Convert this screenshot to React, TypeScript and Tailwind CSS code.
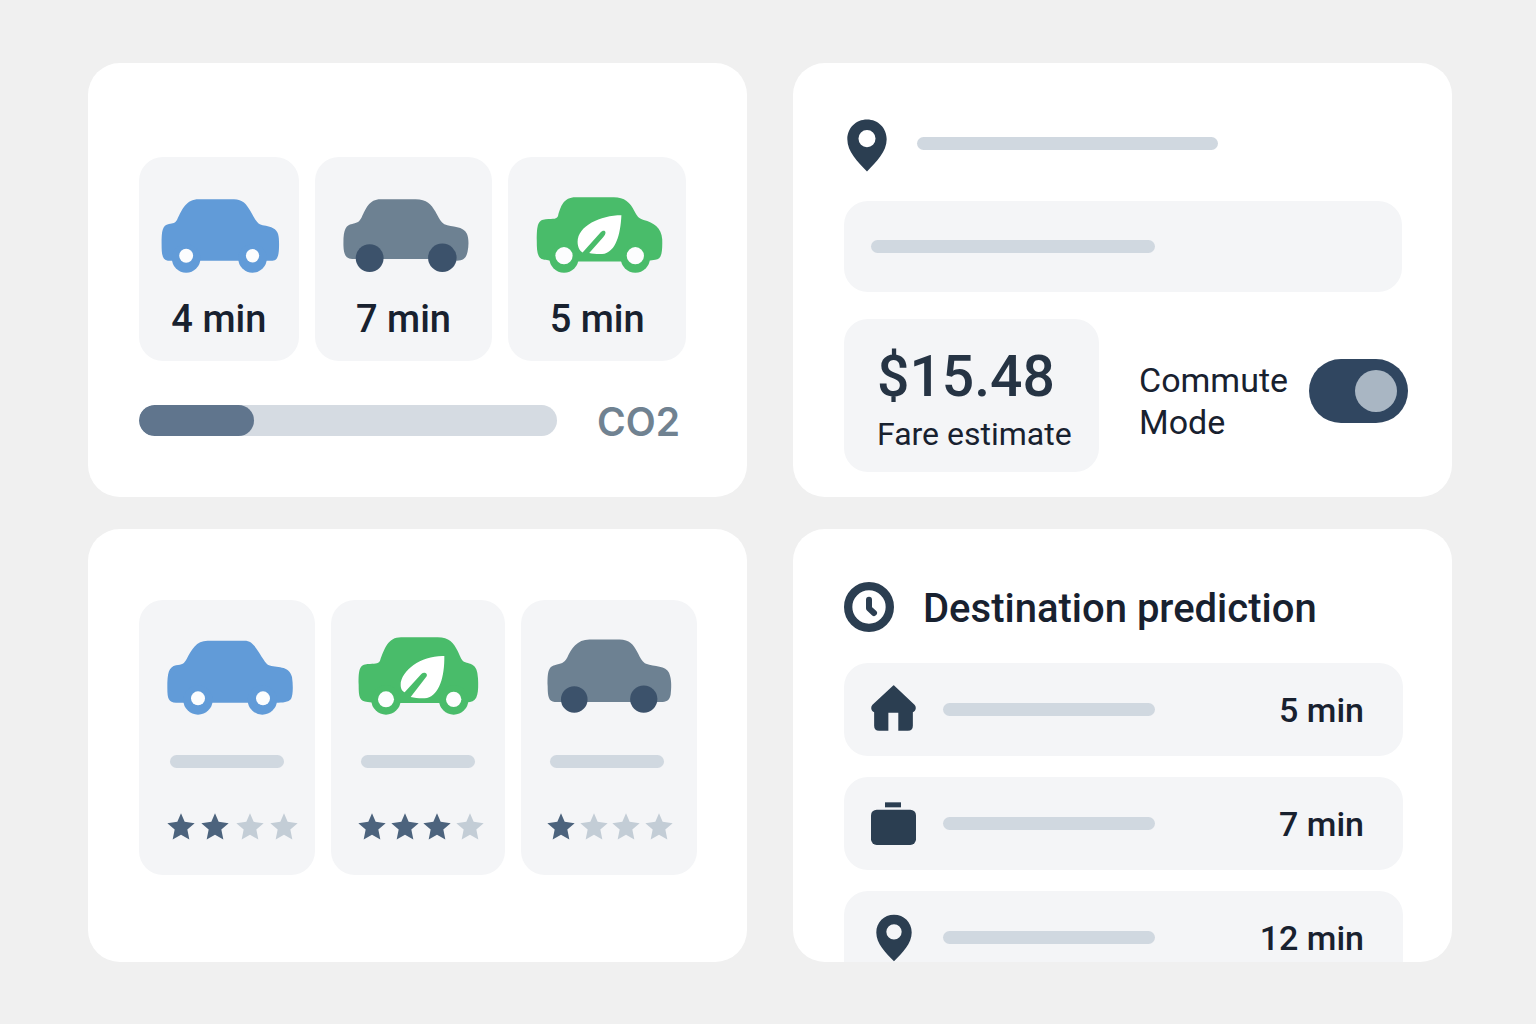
import { useState } from "react";

type CarArt = {
  box: string;
  width: number;
  height: number;
  color: string;
  body: string;
  wheels: number[][];
  hubs?: number[][];
  wheelColor?: string;
  leaf?: string;
};

const BLUE = "#619bd8";
const SLATE = "#6d8192";
const GREEN = "#49bc6a";
const TIRE = "#3c526b";

const sedan: CarArt = {
  box: "95 149 357 223",
  width: 119,
  height: 74,
  color: BLUE,
  body: "M208 150H314C340 150 352 165 364 186C374 204 382 219 392 225C402 230 418 229 432 237C448 245 450 260 450 285C450 315 447 335 430 335H115C98 333 96 315 96 285C96 245 98 228 118 224C130 223 137 222 143 211C158 180 170 150 208 150Z",
  wheels: [[170, 328, 43], [370, 328, 43]],
  hubs: [[170, 320, 21], [370, 320, 20]],
};

const coupe: CarArt = {
  box: "637 149 379 223",
  width: 126,
  height: 74,
  color: SLATE,
  body: "M750 150H855C890 150 902 165 915 187C925 205 932 220 942 225C965 234 1000 230 1010 254C1016 268 1016 290 1012 308C1008 327 1000 334 980 335L960 330H670C645 330 639 318 638 290C637 240 645 228 664 224C680 221 686 218 693 204C706 178 715 150 750 150Z",
  wheels: [[717, 327, 42], [936, 326, 43]],
  wheelColor: TIRE,
};

const eco: CarArt = {
  box: "107 143 380 229",
  width: 127,
  height: 76,
  color: GREEN,
  body: "M225 144H340C372 144 390 160 402 185C410 200 414 207 430 212C460 220 484 235 486 270C487 310 484 332 465 332L430 337H160L135 332C110 332 108 310 108 275C108 225 112 212 135 210C160 208 168 210 172 200C180 172 188 144 225 144Z",
  wheels: [[190, 327, 44], [405, 327, 44]],
  hubs: [[190, 320, 26], [405, 320, 26]],
  leaf: "M363 198C300 198 231 230 231 278C231 295 238 306 246 310L300 250C306 242 315 243 315 250C315 255 312 260 308 264L266 312C280 315 300 316 312 314C345 305 360 260 363 198Z",
};

const sedanWide: CarArt = {
  box: "113 151 378 225",
  width: 126,
  height: 75,
  color: BLUE,
  body: "M235 153H345C365 153 374 165 388 187C400 206 408 220 417 226C440 235 480 226 488 262C492 290 491 318 485 328C478 338 460 339 440 339H140C118 338 114 328 114 295C114 250 118 232 140 227C158 225 165 222 172 208C187 180 200 153 235 153Z",
  wheels: [[206, 331, 44], [399, 331, 44]],
  hubs: [[206, 326, 21], [401, 326, 21]],
};

const ecoWide: CarArt = {
  box: "686 141 363 234",
  width: 121,
  height: 78,
  color: GREEN,
  body: "M815 142H925C960 142 972 158 985 183C993 200 997 214 1008 217C1030 224 1044 225 1046 265C1048 305 1046 334 1022 336L1000 339H740L715 336C690 334 688 322 688 285C687 235 692 224 715 222C735 220 746 223 752 212C766 175 776 142 815 142Z",
  wheels: [[770, 330, 44], [973, 330, 44]],
  hubs: [[770, 328, 24], [973, 328, 23]],
  leaf: "M945 198C880 195 814 240 814 285C814 298 820 304 826 307L876 252C884 244 896 250 892 259L844 321C860 325 880 326 893 324C930 315 946 260 945 198Z",
};

const coupeWide: CarArt = {
  box: "142 149 376 227",
  width: 125,
  height: 76,
  color: SLATE,
  body: "M270 150H360C390 150 402 165 414 188C424 208 430 218 440 223C465 233 500 228 509 250C518 270 516 300 514 315C511 330 505 336 490 338H165C148 334 144 325 144 290C143 245 147 232 165 227C185 222 193 222 203 204C215 178 232 150 270 150Z",
  wheels: [[224, 330, 40], [433, 329, 41]],
  wheelColor: TIRE,
};

function Car({ art }: { art: CarArt }) {
  return (
    <svg viewBox={art.box} width={art.width} height={art.height} className="shrink-0" aria-hidden="true">
      <path d={art.body} fill={art.color} />
      {art.wheels.map(([cx, cy, r]) => (
        <circle key={cx} cx={cx} cy={cy} r={r} fill={art.wheelColor ?? art.color} />
      ))}
      {art.hubs?.map(([cx, cy, r]) => (
        <circle key={cx} cx={cx} cy={cy} r={r} fill="#fcfdfe" />
      ))}
      {art.leaf && <path d={art.leaf} fill="#ffffff" />}
    </svg>
  );
}

function Pin({ className }: { className: string }) {
  return (
    <svg viewBox="50 56 122 160" className={className} fill="#2b3e51" aria-hidden="true">
      <path
        fillRule="evenodd"
        d="M111 57C145 57 171 83 171 117C171 155 140 185 111 215C82 185 51 155 51 117C51 83 77 57 111 57ZM111 89a26 26 0 1 0 0 52a26 26 0 1 0 0-52Z"
      />
    </svg>
  );
}

function Clock() {
  return (
    <svg viewBox="0 0 150 150" className="size-[50px] shrink-0" fill="none" stroke="#2b3e51" aria-hidden="true">
      <circle cx="75" cy="75" r="62.5" strokeWidth="25" />
      <path d="M75 53V79L90 93" strokeWidth="18" strokeLinecap="round" strokeLinejoin="round" />
    </svg>
  );
}

function Home() {
  return (
    <svg viewBox="122 345 135 139" className="mb-1 h-[46px] w-[45px]" fill="#2b3e51" aria-hidden="true">
      <path d="M187 348Q190 344 193 348L253 405C260 413 257 424 248 427V468Q248 483 233 483H204V429H174V483H146Q131 483 131 468V427C122 424 119 413 126 405Z" />
    </svg>
  );
}

function Briefcase() {
  return (
    <svg viewBox="123 95 135 129" className="h-[43px] w-[45px]" fill="#2b3e51" aria-hidden="true">
      <rect x="165" y="96" width="48" height="15" />
      <rect x="123" y="118" width="135" height="106" rx="17" />
    </svg>
  );
}

function Star({ filled }: { filled: boolean }) {
  return (
    <svg viewBox="0 0 84 80" className="h-[27px] w-7" fill={filled ? "#4c637d" : "#c3cdd6"} aria-hidden="true">
      <path d="M42 0L53 26L83 30L61 49L67 79L42 65L17 79L23 49L1 30L31 26Z" />
    </svg>
  );
}

function Line({ className }: { className: string }) {
  return <div className={`h-[13px] rounded-full bg-[#d0d8e0] ${className}`} />;
}

const rides = [
  { art: sedan, eta: "4 min" },
  { art: coupe, eta: "7 min" },
  { art: eco, eta: "5 min" },
];

const ratings = [
  { art: sedanWide, stars: 2, inset: "pl-7", row: "w-[131px]" },
  { art: ecoWide, stars: 3, inset: "pl-[27px]", row: "w-[126px]" },
  { art: coupeWide, stars: 1, inset: "pl-[26px]", row: "w-[126px]" },
];

const destinations = [
  { icon: <Home />, eta: "5 min" },
  { icon: <Briefcase />, eta: "7 min" },
  { icon: <Pin className="h-[48px] w-[36px]" />, eta: "12 min" },
];

export default function App() {
  const [commute, setCommute] = useState(true);
  const co2 = 27.4;

  return (
    <main className="grid min-h-screen grid-cols-2 content-start gap-x-[46px] gap-y-8 bg-[#f0f0f0] py-[63px] pr-[84px] pl-[88px] font-[Roboto,sans-serif] font-medium text-[#18212f]">
      <section className="rounded-[32px] bg-white pt-[94px] pr-[61px] pb-[61px] pl-[51px]">
        <div className="grid grid-cols-[160fr_178fr_178fr] gap-4">
          {rides.map(({ art, eta }) => (
            <button key={eta} type="button" className="flex flex-col items-center rounded-3xl bg-[#f4f5f7] pt-10 pb-[18px]">
              <span className="flex h-[76px] items-end pl-1">
                <Car art={art} />
              </span>
              <span className="mt-[22px] text-[38px] leading-[48px]">{eta}</span>
            </button>
          ))}
        </div>
        <div className="mt-11 flex h-[31px] items-center gap-10">
          <div
            role="progressbar"
            aria-label="CO2"
            aria-valuenow={co2}
            className="h-full flex-1 overflow-hidden rounded-full bg-[#d5dbe2]"
          >
            <div className="h-full rounded-full bg-[#60758d]" style={{ width: `${co2}%` }} />
          </div>
          <span className="w-[89px] pt-0.5 font-[Inter,sans-serif] text-[39px] leading-none font-semibold text-[#708291]">
            CO2
          </span>
        </div>
      </section>

      <section className="rounded-[32px] bg-white pt-14 pr-11 pb-[25px] pl-[51px]">
        <div className="flex items-center gap-[30px] pl-[3px]">
          <Pin className="h-[53px] w-[40px]" />
          <Line className="mb-1 w-[301px]" />
        </div>
        <div className="mt-[29px] mr-1.5 flex h-[91px] items-center rounded-3xl bg-[#f4f5f7] px-[27px]">
          <Line className="w-[284px]" />
        </div>
        <div className="mt-[27px] flex items-start">
          <div className="h-[153px] w-[255px] rounded-3xl bg-[#f4f5f7] pt-[26px] pl-[33px]">
            <p className="text-[57px] leading-[64px] text-[#263444]">$15.48</p>
            <p className="text-[32px] leading-[50px] font-normal whitespace-nowrap">Fare estimate</p>
          </div>
          <label className="ml-10 flex flex-1 items-start justify-between pt-10">
            <span className="w-[150px] text-[34px] leading-[42px] font-normal">Commute Mode</span>
            <span className="relative flex">
              <input
                type="checkbox"
                role="switch"
                checked={commute}
                onChange={(e) => setCommute(e.target.checked)}
                className="peer h-16 w-[99px] cursor-pointer appearance-none rounded-full bg-[#304660]"
              />
              <span className="pointer-events-none absolute top-[11px] left-[11px] size-[42px] rounded-full bg-[#a9b6c3] transition-transform peer-checked:translate-x-[35px]" />
            </span>
          </label>
        </div>
      </section>

      <section className="rounded-[32px] bg-white pt-[71px] pr-[50px] pb-[87px] pl-[51px]">
        <div className="grid grid-cols-[176fr_174fr_176fr] gap-4">
          {ratings.map(({ art, stars, inset, row }) => (
            <article key={stars} className={`rounded-3xl bg-[#f4f5f7] pt-[37px] pb-[35px] ${inset}`}>
              <div className="flex h-[78px] items-end">
                <Car art={art} />
              </div>
              <Line className="mt-10 ml-[3px] w-[114px]" />
              <div className={`mt-[45px] flex justify-between ${row}`} role="img" aria-label={`${stars} of 4 stars`}>
                {[1, 2, 3, 4].map((n) => (
                  <Star key={n} filled={n <= stars} />
                ))}
              </div>
            </article>
          ))}
        </div>
      </section>

      <section className="overflow-hidden rounded-[32px] bg-white pt-[53px] pr-[49px] pl-[51px]">
        <header className="flex h-[50px] items-center gap-[29px]">
          <Clock />
          <h2 className="pt-1 text-[40px] leading-[50px] whitespace-nowrap">Destination prediction</h2>
        </header>
        <ul className="mt-[31px] flex max-h-[299px] flex-col gap-[21px] overflow-hidden">
          {destinations.map(({ icon, eta }) => (
            <li key={eta} className="flex h-[93px] shrink-0 items-center rounded-3xl bg-[#f4f5f7] pr-[39px] pl-[27px]">
              <span className="flex w-[45px] justify-center">{icon}</span>
              <Line className="ml-[27px] w-[212px]" />
              <span className="ml-auto text-[34px] leading-[42px]">{eta}</span>
            </li>
          ))}
        </ul>
      </section>
    </main>
  );
}
